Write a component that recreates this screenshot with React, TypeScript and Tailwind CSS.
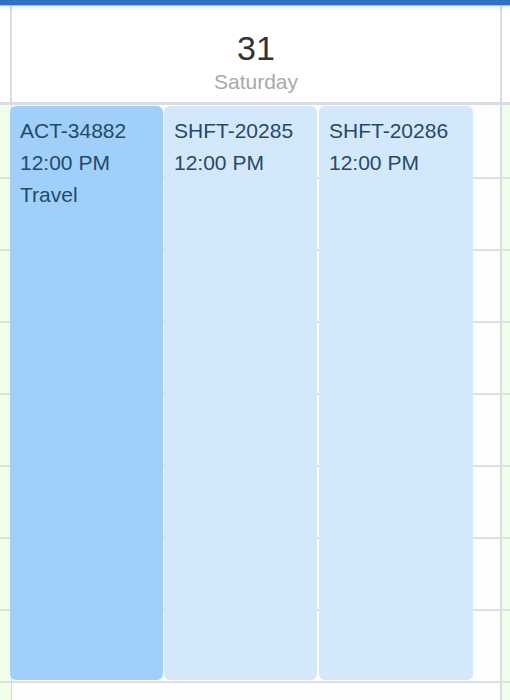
const rows = [74, 72, 72, 72, 72, 72, 72, 72, 40];

const events = [
  { id: "ACT-34882", time: "12:00 PM", note: "Travel", bg: "bg-[#a0cff9]", w: "w-[153px]" },
  { id: "SHFT-20285", time: "12:00 PM", note: "", bg: "bg-[#d4e8fc]", w: "w-[153px]" },
  { id: "SHFT-20286", time: "12:00 PM", note: "", bg: "bg-[#d4e8fc]", w: "w-[154px]" },
];

export default function App() {
  return (
    <div className="relative w-[510px] h-[700px] overflow-hidden bg-white font-['Liberation_Sans',Arial,sans-serif]">
      {/* top toolbar strip */}
      <div className="relative z-10 h-[6px] bg-[#2f6fc9] border-b border-[#b9bcc2] shadow-[0_1px_5px_rgba(0,0,0,0.12)]" />

      {/* day header */}
      <div className="flex h-[96px]">
        <div className="w-[10px] bg-white" />
        <div className="w-[2px] bg-[#dadce4]" />
        <div className="flex-1 flex flex-col items-center pt-[23px]">
          <div className="text-[34px] leading-[38px] text-[#333333]">31</div>
          <div className="text-[21px] leading-[24px] text-[#a9a9a9] mt-[3px]">Saturday</div>
        </div>
        <div className="w-[2px] bg-[#dadce4]" />
        <div className="w-[8px] bg-white" />
      </div>
      <div className="h-[3px] bg-[#d9dce3]" />

      {/* time grid */}
      <div className="flex flex-col">
        {rows.map((h, i) => (
          <div key={i} className="flex border-b-2 border-[#dcdfe6]" style={{ height: h }}>
            <div className="w-[11px] bg-[#f0fde8]" />
            <div className="w-px bg-[#dadce4]" />
            <div className="flex-1 bg-[#fdfdfd]" />
            <div className="w-[2px] bg-[#dadce4]" />
            <div className="w-[8px] bg-[#f0fde8]" />
          </div>
        ))}
      </div>

      {/* events */}
      <div className="absolute left-[10px] top-[106px] flex gap-px h-[574px]">
        {events.map((e, i) => (
          <div
            key={e.id}
            className={`${e.w} ${e.bg} ${i === 2 ? "ml-px" : ""} h-full rounded-[6px] pl-[10px] pt-[9px] text-[21px] leading-[32px] text-[#244a6a]`}
          >
            <div>{e.id}</div>
            <div>{e.time}</div>
            {e.note && <div>{e.note}</div>}
          </div>
        ))}
      </div>
    </div>
  );
}
